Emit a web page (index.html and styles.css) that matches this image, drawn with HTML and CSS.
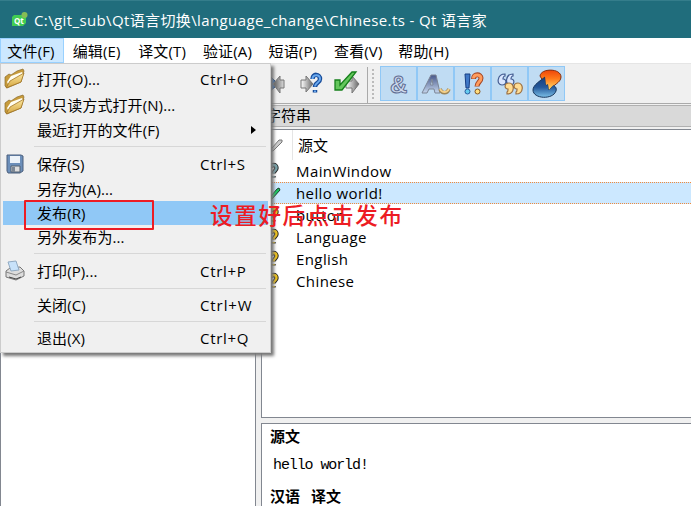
FILE: index.html
```html
<!DOCTYPE html>
<html lang="zh-CN">
<head>
<meta charset="utf-8">
<title>Qt 语言家</title>
<link rel="stylesheet" href="styles.css">
</head>
<body>
<svg class="defs" width="0" height="0">
  <defs>
    <linearGradient id="gold" x2="0" y2="1"><stop offset="0" stop-color="#fbe7a0"/><stop offset="1" stop-color="#d5a640"/></linearGradient>
    <linearGradient id="grey" x2="1"><stop offset="0" stop-color="#fff"/><stop offset="1" stop-color="#666"/></linearGradient>
    <linearGradient id="greyBack" x2="1"><stop offset="0" stop-color="#555"/><stop offset="1" stop-color="#ddd"/></linearGradient>
    <linearGradient id="blue" x2="0" y2="1"><stop offset="0" stop-color="#173e7c"/><stop offset=".5" stop-color="#24589a"/><stop offset="1" stop-color="#7cc0e8"/></linearGradient>
    <linearGradient id="fire" x2="0" y2="1"><stop offset="0" stop-color="#f04b0b"/><stop offset=".4" stop-color="#ff7a1a"/><stop offset="1" stop-color="#ffe070"/></linearGradient>
    <linearGradient id="steel" x2="0" y2="1"><stop offset="0" stop-color="#46578a"/><stop offset="1" stop-color="#c6d7ed"/></linearGradient>
    <symbol id="folder" viewBox="0 0 22 22">
      <path d="M1 9l4-3 2 1 6-4 6-2 1 2-3 11L3 20 1 18z" fill="#c79b3c" stroke="#8a6a2a" stroke-width=".7"/>
      <path d="M3 14L7 8l11-4 1 2-4 8-10 4z" fill="#fffdf0"/>
      <path d="M2 20L6 13 20 5l-3 9z" fill="url(#gold)" stroke="#a27627" stroke-width=".8"/>
    </symbol>
    <symbol id="query" viewBox="0 0 12 18">
      <path d="M3 6C3 2 8.500 2 8.500 6c0 2.500-3 3-3 5.500M5.500 14v1.500" fill="none" stroke="#222" stroke-width="4.400"/>
      <path d="M3 6C3 2 8.500 2 8.500 6c0 2.500-3 3-3 5.500M5.500 14v1.200" fill="none" stroke="currentColor" stroke-width="2.400"/>
    </symbol>
  </defs>
</svg>
<div class="window">
  <header class="titlebar">
    <svg width="17" height="16" viewBox="0 0 17 16"><path d="M3 3h12v8l-3 3H1V5z" fill="#41cd52"/><circle cx="13.500" cy="3" r="3" fill="#86bd55"/><text x="3" y="11.500" class="qt">Qt</text></svg>
    <h1>C:\git_sub\Qt语言切换\language_change\Chinese.ts - Qt 语言家</h1>
  </header>
  <nav class="menubar">
    <span class="active">文件(F)</span><span>编辑(E)</span><span>译文(T)</span><span>验证(A)</span><span>短语(P)</span><span>查看(V)</span><span>帮助(H)</span>
  </nav>
  <div class="toolbar">
    <div class="nav-tools">
      <svg width="28" height="28" viewBox="0 0 28 28"><path d="M7 5l6 6v6l-6 5" fill="#286bc1" stroke="#174480"/><path d="M11 14l7-8v4h4v8h-4v5z" fill="url(#greyBack)" stroke="#777"/></svg>
      <svg width="28" height="28" viewBox="0 0 28 28"><path d="M3 10h5V6l7 8-7 8v-4H3z" fill="url(#grey)" stroke="#777"/><path d="M14.500 9c0-6 7.500-5 7.500 0 0 4-5 3.500-5 8M17 20v2.500" fill="none" stroke="#174c9a" stroke-width="4.500"/><path d="M14.500 9c0-5 7.500-5 7.500 0 0 4-5 3.500-5 7.500M17 20.500v1.500" fill="none" stroke="#6aa9ef" stroke-width="2"/></svg>
      <svg width="28" height="28" viewBox="0 0 28 28"><path d="M12 11h6V6l7 8-7 9v-5h-6z" fill="url(#grey)" stroke="#777"/><path d="M1 10h5v5L18 2h4L8 20H1z" fill="#64c65c" stroke="#16801b" stroke-width="1.300"/></svg>
    </div>
    <div class="grip"></div>
    <div class="toggles">
      <button><svg width="28" height="28" viewBox="0 0 28 28"><text x="5" y="23" class="glyph amp">&amp;</text></svg></button>
      <button><svg width="32" height="28" viewBox="0 0 32 28"><path d="M2 23L11 5h5l4 18h-5l-1-4H9l-2 4zM10.500 15H13l-1-6z" fill="url(#steel)" stroke="#7c8596"/><path d="M20 19c2 5 7 5 9 0" fill="none" stroke="#9b8558" stroke-width="3.500"/><path d="M20 19c2 4 7 4 9 0" fill="none" stroke="#f4cf88" stroke-width="1.800"/></svg></button>
      <button><svg width="28" height="28" viewBox="0 0 28 28"><path d="M6 4h5l-1 14H7z" fill="#3f78c7" stroke="#173e83"/><circle cx="8.500" cy="21.500" r="2.500" fill="#65ccef" stroke="#285ca0"/><path d="M14.500 9c0-6 7.500-5 7.500-1 0 4-4 4-4 8.500" fill="none" stroke="#a44624" stroke-width="5"/><path d="M14.500 8.500c0-4.500 7.500-4.500 7.500-.5 0 4-4 4-4 8" fill="none" stroke="#ff9c5d" stroke-width="3"/><circle cx="18.500" cy="21.500" r="2.500" fill="#ffdd7d" stroke="#855620"/></svg></button>
      <button><svg width="28" height="28" viewBox="0 0 28 28"><g stroke-width="1.200"><path d="M9 4C1 4 0 15 6 15c5 0 5-6 1-6 0-2 1-3 2-3zM17 4c-8 0-8 11-3 11s5-6 1-6c0-2 1-3 2-3z" fill="#d9e6ff" stroke="#435c91"/><path d="M11 24c8 0 8-11 2-11-5 0-5 6-1 6 0 2 0 3-1 3zM20 24c8 0 8-11 2-11-5 0-5 6-1 6 0 2 0 3-1 3z" fill="#ffdc93" stroke="#9d7041"/></g></svg></button>
      <button><svg width="32" height="32" viewBox="0 0 32 32"><path d="M9 8C10 0 30 0 30 9c0 6-9 8-12 14z" fill="url(#fire)" stroke="#813015"/><path d="M14 9C9 13 2 17 2 22c0 9 20 10 23 1 1-3-1-5-3-6l-4 5-1-6-2 1z" fill="url(#blue)" stroke="#19375d"/><path d="M10 7C12 2 29 1 29 9c0 5-8 8-11 13l-1-6-2 1-1-9z" fill="url(#fire)"/></svg></button>
    </div>
  </div>
  <main class="workspace">
    <section class="context"></section>
    <section class="editor">
      <h2 class="dock-title">字符串</h2>
      <div class="strings">
        <div class="row head"><i><svg width="15" height="16" viewBox="0 0 15 16"><path d="M0 9l4 2 7-8h3v2L5 14H2z" fill="#ccc" stroke="#777"/></svg></i><b>源文</b></div>
        <div class="row"><i class="teal"><svg width="12" height="18"><use href="#query"/></svg></i><span>MainWindow</span></div>
        <div class="row selected"><i><svg width="14" height="16" viewBox="0 0 14 16"><path d="M0 10l3 1L9 4l2-1 1 2-8 9H1z" fill="#18c961" stroke="#173c28"/></svg></i><span>hello world!</span></div>
        <div class="row"><i><svg width="12" height="18"><use href="#query"/></svg></i><span>button</span></div>
        <div class="row"><i><svg width="12" height="18"><use href="#query"/></svg></i><span>Language</span></div>
        <div class="row"><i><svg width="12" height="18"><use href="#query"/></svg></i><span>English</span></div>
        <div class="row"><i><svg width="12" height="18"><use href="#query"/></svg></i><span>Chinese</span></div>
      </div>
      <div class="translation"><h3>源文</h3><p>hello world!</p><h3>汉语 译文</h3></div>
    </section>
  </main>
</div>
<div class="menu">
  <div class="item tall"><svg width="22" height="22"><use href="#folder"/></svg><span>打开(O)...</span><kbd>Ctrl+O</kbd></div>
  <div class="item tall"><svg width="22" height="22"><use href="#folder"/></svg><span>以只读方式打开(N)...</span></div>
  <div class="item"><i></i><span>最近打开的文件(F)</span><svg class="arrow" width="5" height="8"><path d="M0 0l5 4-5 4z"/></svg></div>
  <hr>
  <div class="item tall"><svg width="22" height="22" viewBox="0 0 22 22"><path d="M3 2h14l2 1v15l-3 2H4l-1-2z" fill="#6c8fba" stroke="#4b5f7c"/><path d="M6 3h10v7H6z" fill="#edf3f9"/><path d="M7 13h9v6H7z" fill="#ddd" stroke="#526071"/><path d="M8 14h3v5H8z" fill="#7c8794"/></svg><span>保存(S)</span><kbd>Ctrl+S</kbd></div>
  <div class="item"><i></i><span>另存为(A)...</span></div>
  <div class="item current"><i></i><span>发布(R)</span></div>
  <div class="item"><i></i><span>另外发布为...</span></div>
  <hr>
  <div class="item tall"><svg width="22" height="22" viewBox="0 0 22 22"><path d="M2 11l4-3 10-1 4 4v5l-8 4-10-3z" fill="#ddd" stroke="#777"/><path d="M4 2l8-1 3 9-8 1z" fill="#c8e2fa" stroke="#91aac2"/><path d="M2 12l10 3 8-4" fill="none" stroke="#888"/><path d="M5 17l7 2 5-2" fill="none" stroke="#444"/></svg><span>打印(P)...</span><kbd>Ctrl+P</kbd></div>
  <hr>
  <div class="item"><i></i><span>关闭(C)</span><kbd class="wide">Ctrl+W</kbd></div>
  <hr>
  <div class="item"><i></i><span>退出(X)</span><kbd>Ctrl+Q</kbd></div>
</div>
<div class="callout-box"></div>
<div class="callout">设置好后点击发布</div>
</body>
</html>
```
FILE: styles.css
```css
* { box-sizing: border-box; }
body { margin: 0; overflow: hidden; color: #000; font: 15px/22px "Open Sans", "Noto Sans CJK SC", sans-serif; }
svg { display: block; flex: none; }
.defs { position: absolute; }
.window { display: flex; flex-direction: column; width: 691px; height: 506px; background: #f0f0f0; }
.titlebar { display: flex; align-items: center; gap: 6px; height: 38px; padding-left: 11px; background: #206d7c; border-top: 1px solid #347d8b; color: #fff; }
.titlebar h1 { margin: 0; font-size: 15px; font-weight: 400; white-space: nowrap; letter-spacing: .38px; }
.qt { font: bold 8px "Open Sans", sans-serif; fill: #fff; }
.glyph { font: bold 24px "Liberation Sans", sans-serif; stroke: #5f6d93; stroke-width: 1px; }
.amp { fill: #ced9ed; }
.menubar { display: flex; flex: none; height: 25px; background: #fff; }
.menubar span { width: 65.4px; text-align: center; line-height: 26px; white-space: nowrap; letter-spacing: .15px; }
.menubar .active { width: 64px; padding-right: 2px; background: #cce8ff; border: 1px solid #99d1ff; line-height: 24px; }
.toolbar { display: flex; flex: none; height: 41px; padding-top: 3px; border-top: 1px solid #e5e5e5; border-bottom: 1px solid #aaa; }
.nav-tools { display: flex; gap: 8px; width: 368px; padding: 3px 0 0 262px; height: 37px; border-right: 1px solid #aaa; }
.grip { width: 2px; height: 30px; margin: 2px 5px 0 4px; background: repeating-linear-gradient(#bbb 0 2px, transparent 2px 4px); }
.toggles { display: flex; margin-left: 1px; }
.toggles button { display: flex; align-items: center; justify-content: center; width: 37px; height: 35px; margin-top: -1px; padding: 0; background: #c0dcf3; border: 1px solid #90c8f6; }
.workspace { display: flex; flex: 1; gap: 5px; min-height: 0; }
.context { width: 256px; margin-top: 25px; background: #fff; border: 1px solid #828790; border-bottom: 0; }
.editor { display: flex; flex: 1; flex-direction: column; min-width: 0; }
.dock-title { flex: none; height: 22px; margin: 1px 0 2px; padding-left: 5px; font-size: 15px; line-height: 19px; font-weight: 400; background: #d9d9d9; border: solid #b0b0b0; border-width: 1px 0; }
.strings { flex: none; height: 289px; background: #fff; border: 1px solid #828790; border-right: 0; }
.row { display: flex; align-items: center; height: 22px; padding-left: 6px; }
.row i { width: 28px; color: #f0c319; }
.row .teal { color: #78a4ab; }
.row span { letter-spacing: .4px; line-height: 20px; }
.row.head { height: 30px; }
.row.head b { padding-left: 5px; font-weight: 400; border-left: 1px solid #e5e5e5; line-height: 30px; margin-left: -4px; }
.row.selected { background: #cce8ff; border: dotted #f08a3c; border-width: 1px 0; }
.translation { flex: 1; margin-top: 5px; padding: 4px 8px; background: #fff; border: 1px solid #828790; border-right: 0; border-bottom: 0; }
.translation h3 { margin: 0; font: bold 15px/22px "Liberation Mono", "Noto Sans CJK SC", monospace; word-spacing: 2px; }
.translation p { margin: 5px 0 11px 3px; font: 15px/22px "Liberation Mono", monospace; letter-spacing: -1.1px; }
.menu { position: absolute; left: 0; top: 63px; width: 271px; height: 290px; padding: 2px; background: #f0f0f0; border: 1px solid #ccc; box-shadow: 3px 3px 3px #777; }
.item { display: grid; grid-template-columns: 22px 151px 1fr; column-gap: 12px; align-items: center; height: 24px; }
.item.tall { height: 26px; }
.item > svg:first-child { margin-left: 1px; }
.item span { white-space: nowrap; letter-spacing: .1px; }
.item kbd { font: inherit; letter-spacing: .7px; }
.item .wide { letter-spacing: .9px; }
.current { background: #90c8f6; }
.arrow { justify-self: end; margin-right: 12px; }
.menu hr { height: 1px; margin: 4px 2px 4px 31px; border: 0; background: #d7d7d7; }
.callout-box { position: absolute; left: 24px; top: 200px; width: 130px; height: 30px; border: 2px solid #ed1c24; border-radius: 1px; }
.callout { position: absolute; left: 210px; top: 200px; color: #ed1c24; font: 500 22.500px/28px "Noto Sans CJK SC", sans-serif; letter-spacing: 1.700px; white-space: nowrap; }
```
